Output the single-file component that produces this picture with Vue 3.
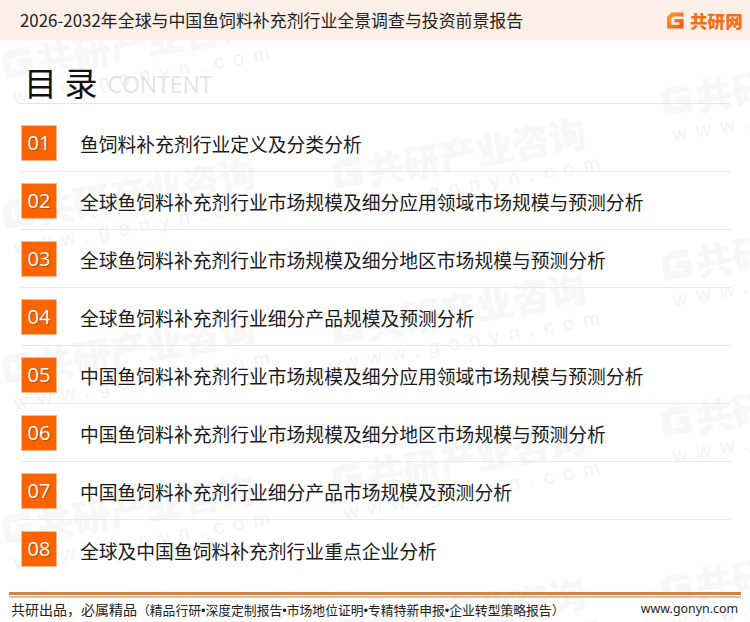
<script setup>
const items = [
  ['01', '鱼饲料补充剂行业定义及分类分析'],
  ['02', '全球鱼饲料补充剂行业市场规模及细分应用领域市场规模与预测分析'],
  ['03', '全球鱼饲料补充剂行业市场规模及细分地区市场规模与预测分析'],
  ['04', '全球鱼饲料补充剂行业细分产品规模及预测分析'],
  ['05', '中国鱼饲料补充剂行业市场规模及细分应用领域市场规模与预测分析'],
  ['06', '中国鱼饲料补充剂行业市场规模及细分地区市场规模与预测分析'],
  ['07', '中国鱼饲料补充剂行业细分产品市场规模及预测分析'],
  ['08', '全球及中国鱼饲料补充剂行业重点企业分析']
]
// [x of the G, y of the G's centre]
const marks = [
  [3, 65], [3, 215], [3, 370], [3, 530],
  [333, 175], [333, 330], [333, 480], [333, 635],
  [662, 102], [662, 267], [662, 423], [662, 590]
]
function markStyle(m) {
  return { left: m[0] + 'px', top: m[1] - 22 + 'px' }
}
const services = ['精品行研', '深度定制报告', '市场地位证明', '专精特新申报', '企业转型策略报告']
</script>

<template>
  <div class="page">
    <div class="marks" aria-hidden="true">
      <div v-for="m in marks" :key="m.join()" class="mark" :style="markStyle(m)">
        <div class="mark-cn">
          <svg class="mark-g" width="30" height="30" viewBox="0 0 17 17">
            <path d="M16 3 H5.4 L2.5 5.4 V14.4 H14.2 V9 H8" fill="none" stroke="#f7f7f7" stroke-width="4.4" />
          </svg>
          <span>共研产业咨询</span>
        </div>
        <div class="mark-en">www.gonyn.com</div>
      </div>
    </div>

    <header class="top">
      <span class="top-title">2026-2032年全球与中国鱼饲料补充剂行业全景调查与投资前景报告</span>
      <div class="logo">
        <svg width="17" height="17" viewBox="0 0 17 17">
          <defs>
            <linearGradient id="lg" x1="0" y1="0" x2="1" y2="1">
              <stop offset="0" stop-color="#ffa126" />
              <stop offset="1" stop-color="#f1511c" />
            </linearGradient>
          </defs>
          <path d="M0 5 L4.6 0.6 H16.6 V4.6 H6.4 L4.2 6.6 V12.8 H12.4 V10.6 H7.4 V7 H16.6 V16.6 H0 Z" fill="url(#lg)" />
        </svg>
        <span class="logo-text">共研网</span>
      </div>
    </header>

    <div class="heading">
      <h1 class="heading-cn">目 录</h1>
      <span class="heading-en">CONTENT</span>
    </div>

    <ul class="list">
      <li v-for="it in items" :key="it[0]" class="row">
        <span class="badge">{{ it[0] }}</span>
        <span class="label">{{ it[1] }}</span>
      </li>
    </ul>

    <footer class="foot">
      <div class="foot-rule"></div>
      <div class="foot-line">
        <span class="foot-text">共研出品，必属精品<span class="foot-sub">（<template v-for="(s, i) in services" :key="s"><span v-if="i" class="dot">•</span>{{ s }}</template>）</span></span>
        <span class="foot-url">www.gonyn.com</span>
      </div>
    </footer>
  </div>
</template>

<style>
html, body { margin: 0; background: #fff; }
</style>

<style scoped>
.page {
  position: relative;
  width: 750px;
  height: 622px;
  overflow: hidden;
  background: #fff;
  font-family: "Noto Sans CJK SC", "Noto Sans", sans-serif;
  color: #1a1a1a;
  display: flex;
  flex-direction: column;
}
.marks { position: absolute; inset: 0; }
.mark {
  position: absolute;
  width: 270px;
  transform: rotate(-10deg);
  transform-origin: 0 22px;
  color: #f7f7f7;
  white-space: nowrap;
}
.mark-cn {
  display: flex;
  align-items: center;
  gap: 4px;
  font-size: 37px;
  font-weight: 900;
  line-height: 44px;
  height: 44px;
}
.mark-g { flex: none; }
.mark-en {
  font-family: "Liberation Sans", sans-serif;
  font-size: 20px;
  line-height: 24px;
  letter-spacing: 9.5px;
  margin-left: 5px;
  color: #f3f3f3;
}
.top {
  position: relative;
  height: 40px;
  flex: none;
  background: #fcefe8;
  display: flex;
  align-items: center;
  justify-content: space-between;
  padding: 0 7px 0 20px;
}
.top-title { font-size: 16.9px; line-height: 40px; color: #222; }
.logo { display: flex; align-items: center; gap: 6px; }
.logo-text { font-size: 17.5px; font-weight: 900; color: #f2701c; letter-spacing: 0.2px; }
.heading {
  position: relative;
  flex: none;
  margin: 0 20px;
  height: 64px;
  border-bottom: 1px solid #e4e4e4;
  display: flex;
  align-items: flex-end;
  padding: 0 0 1px 4px;
  box-sizing: border-box;
}
.heading-cn {
  margin: 0;
  font-size: 33px;
  font-weight: 400;
  line-height: 40px;
  color: #111;
}
.heading-en {
  margin: 0 0 3px 10px;
  font-size: 23px;
  line-height: 30px;
  color: #e3e3e3;
  font-family: "Open Sans", sans-serif;
}
.list {
  position: relative;
  flex: none;
  margin: 0 0 0 21px;
  width: 709px;
  padding: 10px 0 0;
  list-style: none;
}
.row {
  height: 58px;
  box-sizing: border-box;
  display: flex;
  align-items: center;
  border-bottom: 1px solid #e8e8e8;
}
.row:last-child { border-bottom: 0; }
.badge {
  width: 36px;
  height: 36px;
  flex: none;
  background: #fd6400;
  box-shadow: 0 0 0 1px #ffb98c inset;
  color: #fff;
  font-size: 20px;
  font-family: "Open Sans", sans-serif;
  text-align: center;
  line-height: 36px;
  text-shadow: 1px 1px 1px #b04a00;
}
.label {
  margin-left: 23px;
  padding-top: 2px;
  font-size: 18.8px;
  color: #1a1a1a;
  white-space: nowrap;
}
.foot { position: absolute; left: 9px; right: 9px; top: 592px; }
.foot-rule {
  height: 1px;
  border-top: 3px solid #cf8448;
  border-bottom: 2px solid #e7bd9c;
}
.foot-line {
  display: flex;
  justify-content: space-between;
  padding: 1px 3px 0 2px;
  font-size: 14px;
  line-height: 20px;
  color: #222;
  white-space: nowrap;
}
.foot-sub { font-size: 12.8px; }
.dot { font-family: "Liberation Sans", sans-serif; }
.foot-url { font-family: "Noto Sans", sans-serif; font-size: 12.4px; }
</style>
